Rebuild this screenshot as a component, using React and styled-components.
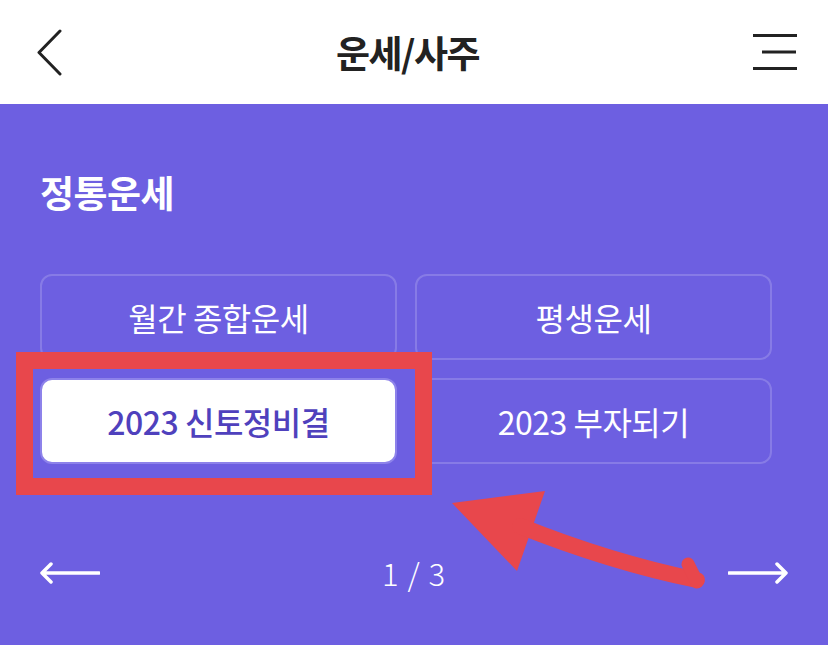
import React from 'react';
import styled, { createGlobalStyle } from 'styled-components';

const GlobalStyle = createGlobalStyle`
  html, body {
    margin: 0;
    padding: 0;
    background: #6d5fe1;
  }
  * { box-sizing: border-box; }
`;

const items = [
  { label: '월간 종합운세' },
  { label: '평생운세' },
  { label: '2023 신토정비결', active: true },
  { label: '2023 부자되기' },
];

const App = () => {
  return (
    <Page>
      <GlobalStyle />
      <Header>
        <IconBtn aria-label="back">
          <svg width="26" height="47" viewBox="0 0 26 47">
            <path d="M24 2 L3 23.5 L24 45" fill="none" stroke="#222" strokeWidth="3" strokeLinecap="round" strokeLinejoin="round" />
          </svg>
        </IconBtn>
        <Title>운세/사주</Title>
        <IconBtn aria-label="menu">
          <svg width="44" height="36" viewBox="0 0 44 36">
            <rect x="0" y="0" width="44" height="3" fill="#222" />
            <rect x="9" y="16.5" width="34" height="3" fill="#222" />
            <rect x="0" y="33" width="44" height="3" fill="#222" />
          </svg>
        </IconBtn>
      </Header>

      <Content>
        <SectionTitle>정통운세</SectionTitle>
        <Grid>
          {items.map((it) => (
            <Item key={it.label} $active={it.active}>{it.label}</Item>
          ))}
        </Grid>
        <Pager>
          <PagerArrow>
            <svg width="60" height="24" viewBox="0 0 60 24">
              <path d="M2 12 H59 M11 3 L2 12 L11 21" fill="none" stroke="#fff" strokeWidth="3.5" strokeLinecap="round" strokeLinejoin="round" />
            </svg>
          </PagerArrow>
          <PageNum>1 / 3</PageNum>
          <PagerArrow>
            <svg width="60" height="24" viewBox="0 0 60 24">
              <path d="M1 12 H58 M49 3 L58 12 L49 21" fill="none" stroke="#fff" strokeWidth="3.5" strokeLinecap="round" strokeLinejoin="round" />
            </svg>
          </PagerArrow>
        </Pager>
      </Content>

      <Highlight />
      <Annotation width="828" height="645" viewBox="0 0 828 645">
        <polygon points="452,503 545,491 517,571" fill="#e8474c" />
        <path d="M520 526 Q 610 562 697 580" fill="none" stroke="#e8474c" strokeWidth="16" strokeLinecap="round" />
        <path d="M697 582 L688 564" fill="none" stroke="#e8474c" strokeWidth="13" strokeLinecap="round" />
      </Annotation>
    </Page>
  );
};

export default App;

const Page = styled.div`
  position: relative;
  width: 828px;
  height: 645px;
  overflow: hidden;
  font-family: "Noto Sans CJK KR", "Noto Sans", sans-serif;
  background: #6d5fe1;
`;

const Header = styled.header`
  height: 104px;
  background: #fff;
  display: flex;
  align-items: center;
  justify-content: space-between;
  padding: 0 31px 0 36px;
`;

const IconBtn = styled.div`
  display: flex;
  align-items: center;
  justify-content: center;
`;

const Title = styled.h1`
  margin: 0;
  font-size: 37px;
  font-weight: 700;
  letter-spacing: -1.5px;
  color: #222;
`;

const Content = styled.main`
  padding: 64px 0 0 40px;
`;

const SectionTitle = styled.h2`
  margin: 0;
  font-size: 37px;
  line-height: 48px;
  font-weight: 700;
  color: #fff;
  letter-spacing: -0.5px;
`;

const Grid = styled.div`
  display: grid;
  grid-template-columns: 357px 357px;
  grid-auto-rows: 86px;
  gap: 18px;
  margin-top: 58px;
`;

const Item = styled.div`
  display: flex;
  align-items: center;
  justify-content: center;
  border-radius: 12px;
  border: 2px solid ${(p) => (p.$active ? '#8d82ea' : 'rgba(255, 255, 255, 0.18)')};
  background: ${(p) => (p.$active ? '#fff' : 'transparent')};
  color: ${(p) => (p.$active ? '#4f41bd' : '#fff')};
  font-size: 32px;
  font-weight: ${(p) => (p.$active ? 500 : 400)};
  letter-spacing: -0.5px;
`;

const Pager = styled.div`
  display: flex;
  align-items: center;
  justify-content: space-between;
  width: 748px;
  margin-top: 86px;
`;

const PagerArrow = styled.div`
  display: flex;
`;

const PageNum = styled.span`
  color: #fff;
  font-size: 31px;
  font-weight: 300;
  letter-spacing: 1px;
`;

const Highlight = styled.div`
  position: absolute;
  left: 16px;
  top: 352px;
  width: 416px;
  height: 143px;
  border: 17px solid #e8474c;
  pointer-events: none;
`;

const Annotation = styled.svg`
  position: absolute;
  left: 0;
  top: 0;
  pointer-events: none;
`;
